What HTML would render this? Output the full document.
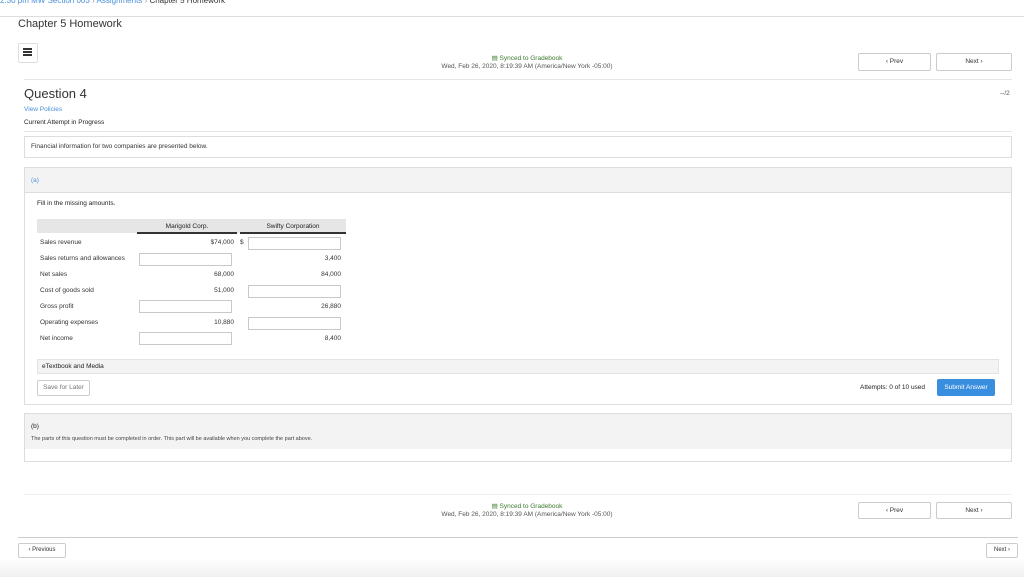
<!DOCTYPE html>
<html><head><meta charset="utf-8"><style>
*{margin:0;padding:0;box-sizing:border-box}
body{width:1024px;height:577px;background:#fff;font-family:"Liberation Sans",sans-serif;color:#333;position:relative;overflow:hidden}
.a{position:absolute;white-space:nowrap}
.s{font-size:6.5px}
.btn{position:absolute;border:1px solid #ccc;border-radius:2px;background:#fff;font-size:6.5px;text-align:center;color:#333}
.inp{position:absolute;border:1px solid #c8c8c8;background:#fff;height:13px}
.r{text-align:right}
</style></head><body>
<div class="a" style="top:-4px;left:0;font-size:8px;color:#4a90d9">2:30 pm MW Section 003 <span style="color:#999">›</span> Assignments <span style="color:#999">›</span> <span style="color:#333">Chapter 5 Homework</span></div>
<div class="a" style="top:16px;left:0;width:1024px;height:1px;background:#ddd"></div>
<div class="a" style="top:18px;left:18px;font-size:11px;color:#333">Chapter 5 Homework</div>
<div class="a" style="top:43px;left:18px;width:20px;height:20px;border:1px solid #ddd;border-radius:2px"></div>
<div class="a" style="top:48px;left:23px;width:9px;height:2px;background:#333;box-shadow:0 3px 0 #333,0 6px 0 #333"></div>

<div class="a s" style="top:54px;left:427px;width:200px;text-align:center;color:#3c7a2c">&#9636; Synced to Gradebook</div>
<div class="a s" style="top:63px;left:427px;width:200px;text-align:center;color:#555">Wed, Feb 26, 2020, 8:19:39 AM (America/New York -05:00)</div>
<div class="btn" style="top:53px;left:858px;width:73px;height:18px;line-height:16px">‹ Prev</div>
<div class="btn" style="top:53px;left:936px;width:76px;height:18px;line-height:16px">Next ›</div>
<div class="a" style="top:79px;left:24px;width:988px;height:1px;background:#e5e5e5"></div>
<div class="a s" style="top:90px;left:1000px;color:#555">--/2</div>

<div class="a" style="top:86px;left:24px;font-size:13px;color:#333">Question 4</div>
<div class="a s" style="top:106px;left:24px;color:#4a90d9">View Policies</div>
<div class="a s" style="top:119px;left:24px;color:#222">Current Attempt in Progress</div>
<div class="a" style="top:131px;left:24px;width:988px;height:1px;background:#e5e5e5"></div>
<div class="a" style="top:136px;left:24px;width:988px;height:22px;border:1px solid #ddd"></div>
<div class="a s" style="top:143px;left:31px">Financial information for two companies are presented below.</div>

<div class="a" style="top:167px;left:24px;width:988px;height:238px;border:1px solid #ddd"></div>
<div class="a" style="top:168px;left:25px;width:986px;height:25px;background:#f3f3f3;border-bottom:1px solid #ddd"></div>
<div class="a s" style="top:177px;left:31px;color:#4a90d9">(a)</div>
<div class="a s" style="top:200px;left:37px;color:#222">Fill in the missing amounts.</div>
<div class="a" style="top:219px;left:37px;width:309px;height:14px;background:#e6e6e6"></div>
<div class="a" style="top:232px;left:137px;width:100px;height:1.5px;background:#333"></div>
<div class="a" style="top:232px;left:240px;width:106px;height:1.5px;background:#333"></div>
<div class="a s" style="top:223px;left:137px;width:100px;text-align:center;color:#222">Marigold Corp.</div>
<div class="a s" style="top:223px;left:240px;width:106px;text-align:center;color:#222">Swifty Corporation</div>

<div class="a s" style="top:239px;left:40px">Sales revenue</div>
<div class="a s" style="top:255px;left:40px">Sales returns and allowances</div>
<div class="a s" style="top:271px;left:40px">Net sales</div>
<div class="a s" style="top:287px;left:40px">Cost of goods sold</div>
<div class="a s" style="top:303px;left:40px">Gross profit</div>
<div class="a s" style="top:319px;left:40px">Operating expenses</div>
<div class="a s" style="top:335px;left:40px">Net income</div>

<div class="a s r" style="top:239px;left:150px;width:84px">$74,000</div>
<div class="a s" style="top:239px;left:240px">$</div>
<div class="inp" style="top:237px;left:248px;width:93px"></div>
<div class="inp" style="top:253px;left:139px;width:93px"></div>
<div class="a s r" style="top:255px;left:250px;width:91px">3,400</div>
<div class="a s r" style="top:271px;left:150px;width:84px">68,000</div>
<div class="a s r" style="top:271px;left:250px;width:91px">84,000</div>
<div class="a s r" style="top:287px;left:150px;width:84px">51,000</div>
<div class="inp" style="top:285px;left:248px;width:93px"></div>
<div class="inp" style="top:300px;left:139px;width:93px"></div>
<div class="a s r" style="top:303px;left:250px;width:91px">26,880</div>
<div class="a s r" style="top:319px;left:150px;width:84px">10,880</div>
<div class="inp" style="top:317px;left:248px;width:93px"></div>
<div class="inp" style="top:332px;left:139px;width:93px"></div>
<div class="a s r" style="top:335px;left:250px;width:91px">8,400</div>

<div class="a" style="top:359px;left:37px;width:962px;height:15px;background:#f3f3f3;border:1px solid #e3e3e3"></div>
<div class="a s" style="top:363px;left:42px;color:#222">eTextbook and Media</div>
<div class="btn" style="top:380px;left:37px;width:53px;height:16px;line-height:14px;color:#777">Save for Later</div>
<div class="a s" style="top:384px;left:860px;color:#222">Attempts: 0 of 10 used</div>
<div class="a" style="top:379px;left:937px;width:58px;height:17px;background:#3a8ee0;border-radius:2px;color:#fff;font-size:6.5px;text-align:center;line-height:17px">Submit Answer</div>

<div class="a" style="top:413px;left:24px;width:988px;height:49px;border:1px solid #ddd"></div>
<div class="a" style="top:414px;left:25px;width:986px;height:35px;background:#f3f3f3"></div>
<div class="a s" style="top:423px;left:31px;color:#222">(b)</div>
<div class="a" style="top:436px;left:31px;font-size:5.5px;color:#444">The parts of this question must be completed in order. This part will be available when you complete the part above.</div>

<div class="a" style="top:494px;left:24px;width:988px;height:1px;background:#f0f0f0"></div>
<div class="a s" style="top:502px;left:427px;width:200px;text-align:center;color:#3c7a2c">&#9636; Synced to Gradebook</div>
<div class="a s" style="top:511px;left:427px;width:200px;text-align:center;color:#555">Wed, Feb 26, 2020, 8:19:39 AM (America/New York -05:00)</div>
<div class="btn" style="top:502px;left:858px;width:73px;height:17px;line-height:15px">‹ Prev</div>
<div class="btn" style="top:502px;left:936px;width:76px;height:17px;line-height:15px">Next ›</div>
<div class="a" style="top:537px;left:18px;width:1000px;height:1px;background:#ccc"></div>
<div class="btn" style="top:543px;left:18px;width:48px;height:15px;line-height:13px;font-size:6px">‹ Previous</div>
<div class="btn" style="top:543px;left:986px;width:32px;height:15px;line-height:13px;font-size:6px">Next ›</div>
<div class="a" style="top:558px;left:0;width:1024px;height:19px;background:linear-gradient(#fff,#f0f0f0)"></div>
</body></html>
